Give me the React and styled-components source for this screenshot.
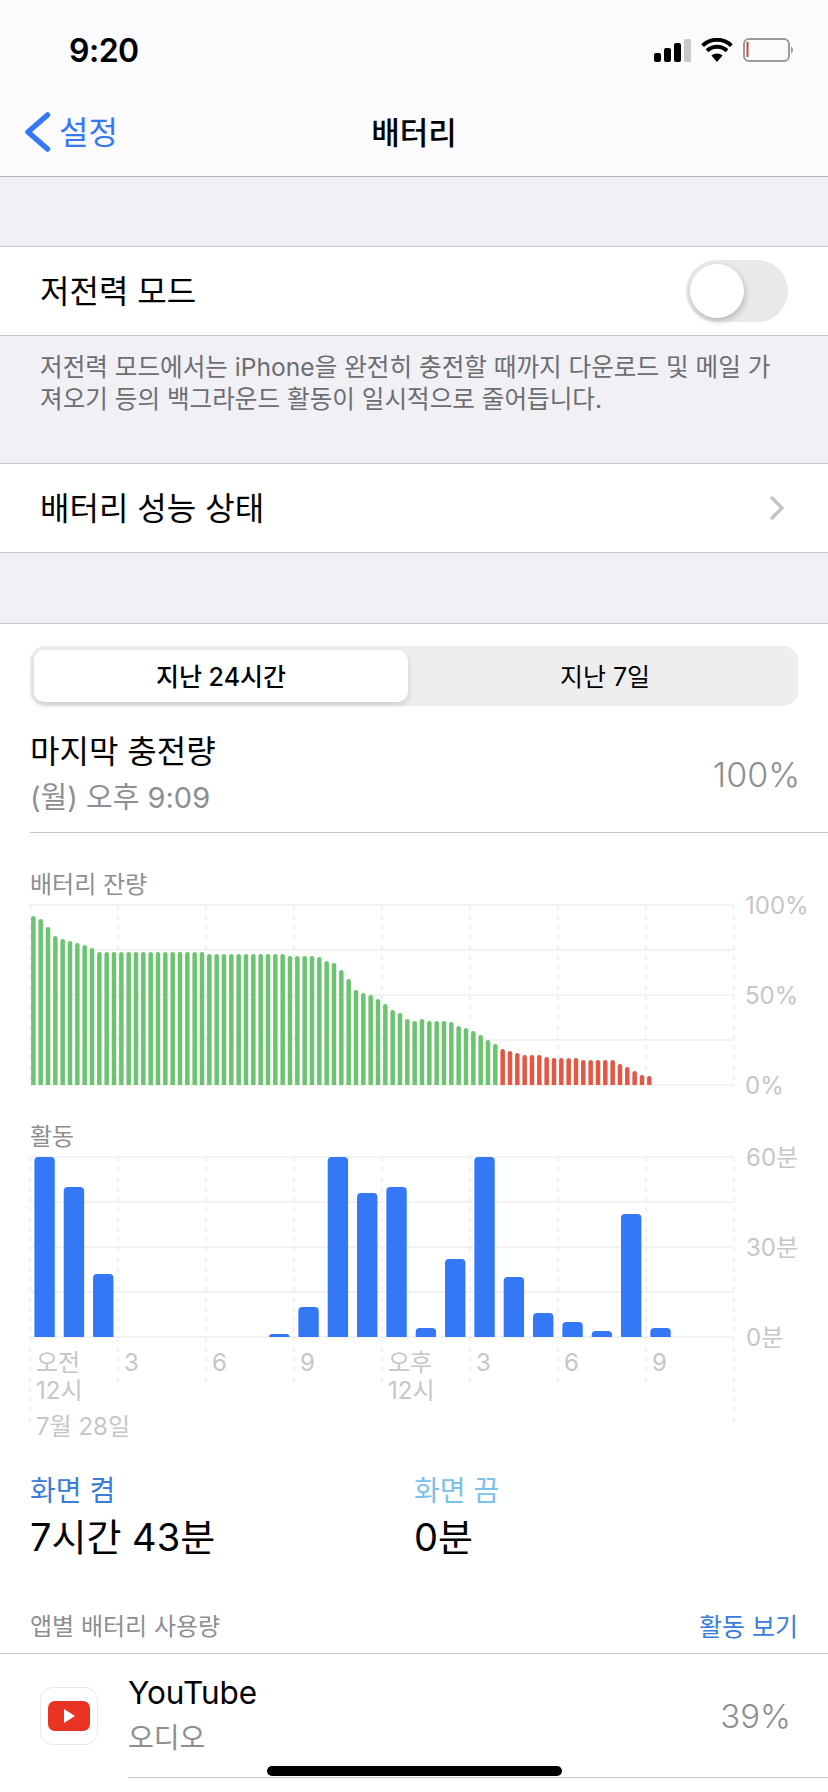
import styled, { createGlobalStyle } from "styled-components";

const FONT = `Inter, "Noto Sans CJK KR", sans-serif`;

// bar tops as read off the screenshot, in px above the baseline
const GREEN = [
  169, 166, 158, 149, 146, 144, 142, 140, 137,
  133, 133, 133, 133, 133, 133, 133, 133, 133, 133, 133, 133, 133, 133, 133,
  131, 131, 131, 131, 131, 131, 131, 131, 131, 131, 131,
  129, 129, 129, 129, 128, 124, 122, 115, 106, 95, 92, 90, 86, 81, 75, 72, 66,
  64, 66, 64, 64, 64, 63, 59, 57, 54, 50, 45, 41,
];
const RED = [36, 34, 32, 30, 30, 30, 28, 27, 27, 27, 27, 25, 25, 25, 25, 25, 21, 18, 14, 10, 9];
const ACTIVITY = [180, 150, 63, 0, 0, 0, 0, 0, 3, 30, 180, 144, 150, 9, 78, 180, 60, 24, 15, 6, 123, 9];

const GlobalStyle = createGlobalStyle`
  html, body {
    margin: 0;
    padding: 0;
    background: #fff;
  }
  body {
    font-family: ${FONT};
    color: #000;
  }
`;

const Page = styled.div`
  position: relative;
  width: 828px;
  height: 1792px;
  overflow: hidden;
  background: #fff;
`;

const TopBar = styled.header`
  height: 177px;
  box-sizing: border-box;
  background: #fbfbfd;
  border-bottom: 1px solid #b2b2b4;
`;

const StatusBar = styled.div`
  height: 100px;
  display: flex;
  align-items: center;
  justify-content: space-between;
  padding: 0 33px 0 69px;
`;

const Time = styled.span`
  font-size: 32px;
  font-weight: 600;
  letter-spacing: -0.5px;
`;

const StatusIcons = styled.div`
  display: flex;
  align-items: center;
  gap: 10px;
`;

const NavBar = styled.div`
  height: 64px;
  display: grid;
  grid-template-columns: 1fr auto 1fr;
  align-items: center;
`;

const BackLink = styled.div`
  display: flex;
  align-items: center;
  gap: 8px;
  padding-left: 25px;
  color: #3478f6;
  font-size: 32px;
`;

const BackLabel = styled.span`
  margin-bottom: 4px;
`;

const NavTitle = styled.div`
  margin-bottom: 4px;
  font-size: 31px;
  font-weight: 500;
`;

const GreySpacer = styled.div`
  height: ${(p) => p.$h}px;
  background: #f0f0f5;
`;

const Row = styled.div`
  height: 90px;
  box-sizing: border-box;
  display: flex;
  align-items: center;
  justify-content: space-between;
  padding: 0 40px;
  background: #fff;
  border-top: 1px solid #c8c8cc;
  border-bottom: 1px solid #c8c8cc;
  font-size: 32px;
`;

const RowLabel = styled.span`
  margin-bottom: 4px;
`;

const Toggle = styled.div`
  width: 102px;
  height: 62px;
  box-sizing: border-box;
  padding: 4px;
  border-radius: 31px;
  background: #e9e9ea;
`;

const Knob = styled.div`
  width: 54px;
  height: 54px;
  border-radius: 50%;
  background: #fff;
  box-shadow: 1px 3px 6px rgba(0, 0, 0, 0.22);
`;

const FooterNote = styled.div`
  height: 127px;
  box-sizing: border-box;
  padding: 15px 40px 0;
  background: #f0f0f5;
  color: #6d6d72;
  font-size: 24.6px;
  line-height: 32px;
`;

const BatterySection = styled.section`
  background: #fff;
  border-top: 1px solid #c8c8cc;
  padding-top: 22px;
`;

const Segmented = styled.div`
  display: flex;
  height: 60px;
  box-sizing: border-box;
  margin: 0 30px;
  padding: 4px;
  border-radius: 15px;
  background: #eeeeef;
`;

const Segment = styled.div`
  flex: ${(p) => (p.$active ? "0 0 374px" : "1")};
  box-sizing: border-box;
  display: flex;
  align-items: center;
  justify-content: center;
  padding: ${(p) => (p.$active ? "0 0 3px" : "0 0 3px 8px")};
  border-radius: 10px;
  font-size: 25px;
  font-weight: ${(p) => (p.$active ? 500 : 400)};
  background: ${(p) => (p.$active ? "#fff" : "transparent")};
  box-shadow: ${(p) => (p.$active ? "0 3px 6px rgba(0, 0, 0, 0.14)" : "none")};
`;

const Summary = styled.div`
  display: flex;
  align-items: center;
  justify-content: space-between;
  margin-left: 30px;
  padding: 24px 28px 14px 0;
  border-bottom: 1px solid #c8c8cc;
`;

const SummaryTitle = styled.div`
  font-size: 32px;
  line-height: 44px;
`;

const SummarySub = styled.div`
  margin-top: 4px;
  color: #8e8e93;
  font-size: 29px;
  line-height: 40px;
`;

const SummaryValue = styled.div`
  color: #8e8e93;
  font-size: 34px;
  font-weight: 300;
`;

const ChartTitle = styled.div`
  margin: 37px 30px 5px;
  color: #8e8e93;
  font-size: 24px;
  line-height: 30px;
`;

const ChartSvg = styled.svg`
  display: block;
  margin-left: 30px;
  overflow: visible;
`;

const AxisLabel = styled.text`
  fill: #c6c6c9;
  font-family: ${FONT};
  font-size: 24px;
  dominant-baseline: central;
`;

const Stats = styled.div`
  display: grid;
  grid-template-columns: 384px 384px;
  margin: 48px 30px 0;
`;

const StatLabel = styled.div`
  color: ${(p) => p.$color};
  font-size: 28px;
  line-height: 36px;
`;

const StatValue = styled.div`
  margin-top: 2px;
  font-size: 38px;
  line-height: 52px;
`;

const AppHeader = styled.div`
  display: flex;
  justify-content: space-between;
  padding: 49px 30px 11px;
  border-bottom: 1px solid #c8c8cc;
  font-size: 24px;
  line-height: 30px;
  color: #8e8e93;
`;

const HeaderLink = styled.span`
  color: #3a7ddb;
  font-size: 25px;
`;

const AppRow = styled.div`
  height: 124px;
  box-sizing: border-box;
  display: flex;
  align-items: center;
  padding-left: 40px;
`;

const AppIcon = styled.div`
  flex: none;
  width: 58px;
  height: 58px;
  box-sizing: border-box;
  display: flex;
  align-items: center;
  justify-content: center;
  border: 1px solid #e8e8ea;
  border-radius: 13px;
  background: #fff;
`;

const AppBody = styled.div`
  flex: 1;
  height: 100%;
  box-sizing: border-box;
  display: flex;
  align-items: center;
  justify-content: space-between;
  margin-left: 30px;
  padding-right: 37px;
  border-bottom: 1px solid #c8c8cc;
`;

const AppName = styled.div`
  font-size: 31.5px;
  line-height: 40px;
`;

const AppKind = styled.div`
  margin-top: 5px;
  color: #8e8e93;
  font-size: 28px;
  line-height: 40px;
`;

const AppShare = styled.div`
  color: #8e8e93;
  font-size: 33px;
  font-weight: 300;
`;

const HomeIndicator = styled.div`
  position: absolute;
  left: 267px;
  bottom: 16px;
  width: 295px;
  height: 10px;
  border-radius: 5px;
  background: #000;
`;

const ChevronSvg = styled.svg`
  margin-right: 4px;
`;

const SignalIcon = () => (
  <svg width="37" height="23" viewBox="0 0 37 23">
    <rect x="0" y="14" width="7" height="9" rx="2" fill="#000" />
    <rect x="10" y="9" width="7" height="14" rx="2" fill="#000" />
    <rect x="20" y="4" width="7" height="19" rx="2" fill="#000" />
    <rect x="30" y="0" width="7" height="23" rx="1.5" fill="#c8c8cb" />
  </svg>
);

const WifiIcon = () => (
  <svg width="32" height="24" viewBox="0 0 32 24">
    <path d="M16 24 L10.4 17.6 A8.5 8.5 0 0 1 21.6 17.6 Z" fill="#000" />
    <path d="M6 12.8 A14.5 14.5 0 0 1 26 12.8" fill="none" stroke="#000" strokeWidth="4" />
    <path d="M1.6 7.6 A20.8 20.8 0 0 1 30.4 7.6" fill="none" stroke="#000" strokeWidth="4" />
  </svg>
);

const BatteryIcon = () => (
  <svg width="52" height="24" viewBox="0 0 52 24">
    <rect x="1" y="1" width="45" height="22" rx="5" fill="none" stroke="#9a9a9d" strokeWidth="2" />
    <rect x="3.5" y="4" width="2" height="15" fill="#d0453b" />
    <path d="M48 8.5 A4 4 0 0 1 48 15.5 Z" fill="#9a9a9d" />
  </svg>
);

const BackChevron = () => (
  <svg width="26" height="40" viewBox="0 0 26 40">
    <path d="M22.5 3 L3 20 L22.5 37" fill="none" stroke="#3478f6" strokeWidth="5.5" strokeLinecap="round" strokeLinejoin="round" />
  </svg>
);

const DisclosureChevron = () => (
  <ChevronSvg width="14" height="24" viewBox="0 0 14 24">
    <path d="M2 2 L12 12 L2 22" fill="none" stroke="#c4c4c7" strokeWidth="3.4" strokeLinecap="round" strokeLinejoin="round" />
  </ChevronSvg>
);

// bar with rounded top and a flat foot
const topRounded = (x, w, h, base, r) => {
  const rr = Math.min(r, h);
  const top = base - h;
  return `M${x} ${base}V${top + rr}Q${x} ${top} ${x + rr} ${top}H${x + w - rr}Q${x + w} ${top} ${x + w} ${top + rr}V${base}Z`;
};

// grid shared by both charts: 4 bands, 8 columns of 88px
const ChartGrid = ({ plotH, tallH, endH }) => (
  <g>
    {[0, 1, 2, 3, 4].map((i) => (
      <line key={i} x1="0" x2="704" y1={(plotH / 4) * i} y2={(plotH / 4) * i} stroke="#efeff1" strokeWidth="1.5" />
    ))}
    {[0, 1, 2, 3, 4, 5, 6, 7, 8].map((i) => (
      <line
        key={i}
        x1={i * 88}
        x2={i * 88}
        y1="0"
        y2={i === 0 || i === 8 ? endH : tallH}
        stroke="#e6e6e8"
        strokeWidth="1"
        strokeDasharray="5 5"
      />
    ))}
  </g>
);

const BatteryChart = () => (
  <ChartSvg width="768" height="180" viewBox="0 0 768 180">
    <ChartGrid plotH={180} tallH={180} endH={180} />
    {GREEN.map((h, i) => (
      <path key={i} d={topRounded(1.1 + i * 7.333, 4.5, h, 180, 2.2)} fill="#6cc470" />
    ))}
    {RED.map((h, i) => (
      <path key={i} d={topRounded(1.1 + (i + GREEN.length) * 7.333, 4.5, h, 180, 2.2)} fill="#e35744" />
    ))}
    <AxisLabel x="715" y="0">100%</AxisLabel>
    <AxisLabel x="715" y="90">50%</AxisLabel>
    <AxisLabel x="715" y="180">0%</AxisLabel>
  </ChartSvg>
);

const ActivityChart = () => (
  <ChartSvg width="768" height="268" viewBox="0 0 768 268">
    <ChartGrid plotH={180} tallH={225} endH={268} />
    {ACTIVITY.map((h, i) =>
      h > 0 ? <path key={i} d={topRounded(4.4 + i * 29.33, 20.4, h, 180, 4)} fill="#3478f6" /> : null
    )}
    <AxisLabel x="716" y="0">60분</AxisLabel>
    <AxisLabel x="716" y="90">30분</AxisLabel>
    <AxisLabel x="716" y="180">0분</AxisLabel>
    <AxisLabel x="6" y="205">오전</AxisLabel>
    <AxisLabel x="6" y="233">12시</AxisLabel>
    <AxisLabel x="6" y="269">7월 28일</AxisLabel>
    <AxisLabel x="94" y="205">3</AxisLabel>
    <AxisLabel x="182" y="205">6</AxisLabel>
    <AxisLabel x="270" y="205">9</AxisLabel>
    <AxisLabel x="358" y="205">오후</AxisLabel>
    <AxisLabel x="358" y="233">12시</AxisLabel>
    <AxisLabel x="446" y="205">3</AxisLabel>
    <AxisLabel x="534" y="205">6</AxisLabel>
    <AxisLabel x="622" y="205">9</AxisLabel>
  </ChartSvg>
);

const YouTubeMark = () => (
  <svg width="42" height="30" viewBox="0 0 42 30">
    <rect width="42" height="30" rx="7" fill="#e93323" />
    <path d="M16 8 L27 15 L16 22 Z" fill="#fff" />
  </svg>
);

const App = () => {
  return (
    <Page>
      <GlobalStyle />
      <TopBar>
        <StatusBar>
          <Time>9:20</Time>
          <StatusIcons>
            <SignalIcon />
            <WifiIcon />
            <BatteryIcon />
          </StatusIcons>
        </StatusBar>
        <NavBar>
          <BackLink>
            <BackChevron />
            <BackLabel>설정</BackLabel>
          </BackLink>
          <NavTitle>배터리</NavTitle>
        </NavBar>
      </TopBar>

      <GreySpacer $h={69} />
      <Row>
        <RowLabel>저전력 모드</RowLabel>
        <Toggle>
          <Knob />
        </Toggle>
      </Row>
      <FooterNote>
        저전력 모드에서는 iPhone을 완전히 충전할 때까지 다운로드 및 메일 가져오기 등의 백그라운드 활동이 일시적으로 줄어듭니다.
      </FooterNote>
      <Row>
        <RowLabel>배터리 성능 상태</RowLabel>
        <DisclosureChevron />
      </Row>
      <GreySpacer $h={70} />

      <BatterySection>
        <Segmented>
          <Segment $active>지난 24시간</Segment>
          <Segment>지난 7일</Segment>
        </Segmented>
        <Summary>
          <div>
            <SummaryTitle>마지막 충전량</SummaryTitle>
            <SummarySub>(월) 오후 9:09</SummarySub>
          </div>
          <SummaryValue>100%</SummaryValue>
        </Summary>

        <ChartTitle>배터리 잔량</ChartTitle>
        <BatteryChart />
        <ChartTitle>활동</ChartTitle>
        <ActivityChart />

        <Stats>
          <div>
            <StatLabel $color="#3a7ddb">화면 켬</StatLabel>
            <StatValue>7시간 43분</StatValue>
          </div>
          <div>
            <StatLabel $color="#7cc0ec">화면 끔</StatLabel>
            <StatValue>0분</StatValue>
          </div>
        </Stats>

        <AppHeader>
          앱별 배터리 사용량
          <HeaderLink>활동 보기</HeaderLink>
        </AppHeader>
        <AppRow>
          <AppIcon>
            <YouTubeMark />
          </AppIcon>
          <AppBody>
            <div>
              <AppName>YouTube</AppName>
              <AppKind>오디오</AppKind>
            </div>
            <AppShare>39%</AppShare>
          </AppBody>
        </AppRow>
      </BatterySection>
      <HomeIndicator />
    </Page>
  );
};

export default App;
